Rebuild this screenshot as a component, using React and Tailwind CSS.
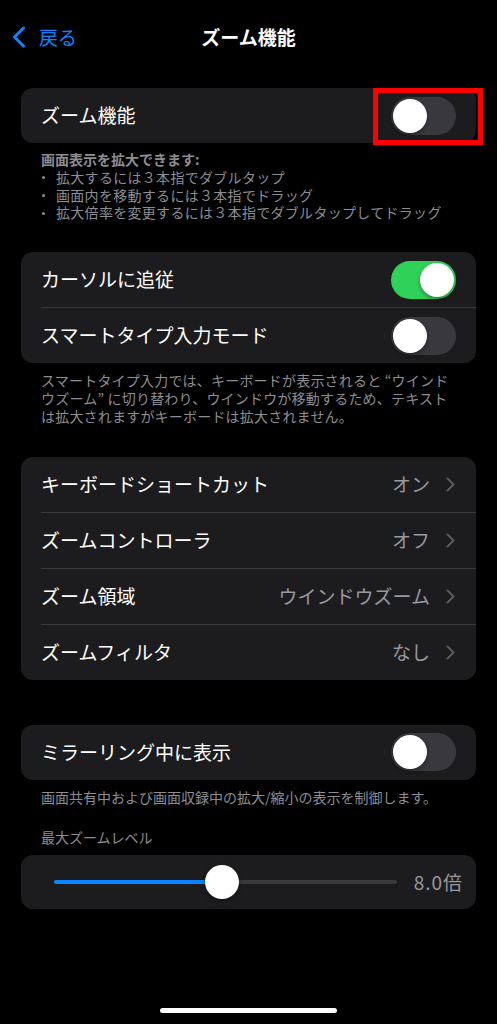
const font = { fontFamily: '"Noto Sans CJK JP", "Noto Sans", sans-serif' };

const Toggle = ({ on }) => (
  <div
    className={`relative w-[65px] h-[38px] rounded-full shrink-0 ${on ? "bg-[#30d158]" : "bg-[#39393d]"}`}
  >
    <div
      className={`absolute top-[2px] w-[34px] h-[34px] rounded-full bg-white shadow-[0_2px_4px_rgba(0,0,0,0.35)] ${on ? "right-[2px]" : "left-[2px]"}`}
    />
  </div>
);

const Chevron = () => (
  <svg width="9" height="15" viewBox="0 0 9 15" fill="none" className="shrink-0">
    <path d="M1.5 1.5 L7.5 7.5 L1.5 13.5" stroke="#5b5b60" strokeWidth="2" strokeLinecap="round" strokeLinejoin="round" />
  </svg>
);

const Divider = () => <div className="ml-[20px] h-px bg-[#38383a]" />;

const ToggleRow = ({ label, on }) => (
  <div className="flex items-center justify-between h-[55px] pl-[20px] pr-[20px]">
    <span className="text-[19px] text-white">{label}</span>
    <Toggle on={on} />
  </div>
);

const LinkRow = ({ label, value }) => (
  <div className="flex items-center justify-between h-[55px] pl-[20px] pr-[21px]">
    <span className="text-[19px] text-white">{label}</span>
    <div className="flex items-center gap-[16px]">
      <span className="text-[19px] text-[#98989f]">{value}</span>
      <Chevron />
    </div>
  </div>
);

const Footer = ({ children, className = "" }) => (
  <div className={`px-[41px] text-[14px] leading-[17.8px] text-[#8d8d93] ${className}`}>{children}</div>
);

const Bullet = ({ children }) => (
  <div className="flex items-center">
    <span className="w-[15px] flex items-center">
      <span className="ml-[1px] w-[3px] h-[3px] rounded-full bg-[#8d8d93]" />
    </span>
    <span className="tracking-[0.3px]">{children}</span>
  </div>
);

export default function App() {
  return (
    <div className="w-[497px] h-[1024px] bg-black overflow-hidden flex flex-col" style={font}>
      {/* nav */}
      <div className="relative h-[74px] flex items-center justify-center shrink-0">
        <div className="absolute left-[12px] top-0 h-full flex items-center gap-[13px]">
          <svg width="14" height="22" viewBox="0 0 14 22" fill="none">
            <path d="M11.5 2 L2.5 11 L11.5 20" stroke="#0a84ff" strokeWidth="3" strokeLinecap="round" strokeLinejoin="round" />
          </svg>
          <span className="text-[19px] text-[#0a84ff]">戻る</span>
        </div>
        <span className="text-[19px] font-bold text-white">ズーム機能</span>
      </div>

      {/* zoom toggle */}
      <div className="relative mt-[14px] mx-[21px] rounded-[12px] bg-[#1c1c1e]">
        <ToggleRow label="ズーム機能" on={false} />
        <div className="absolute left-[352px] top-0 w-[110px] h-[57px] border-[5px] border-[#ff0000]" />
      </div>
      <Footer className="pt-[8px]">
        <div className="font-semibold">画面表示を拡大できます:</div>
        <Bullet>拡大するには３本指でダブルタップ</Bullet>
        <Bullet>画面内を移動するには３本指でドラッグ</Bullet>
        <Bullet>拡大倍率を変更するには３本指でダブルタップしてドラッグ</Bullet>
      </Footer>

      {/* follow / smart typing */}
      <div className="mt-[30px] mx-[21px] rounded-[12px] bg-[#1c1c1e] overflow-hidden">
        <ToggleRow label="カーソルに追従" on={true} />
        <Divider />
        <ToggleRow label="スマートタイプ入力モード" on={false} />
      </div>
      <Footer className="pt-[9px] whitespace-nowrap tracking-[0.2px]">
        <div>スマートタイプ入力では、キーボードが表示されると “ウインド</div>
        <div>ウズーム” に切り替わり、ウインドウが移動するため、テキスト</div>
        <div>は拡大されますがキーボードは拡大されません。</div>
      </Footer>

      {/* links */}
      <div className="mt-[31px] mx-[21px] rounded-[12px] bg-[#1c1c1e] overflow-hidden">
        <LinkRow label="キーボードショートカット" value="オン" />
        <Divider />
        <LinkRow label="ズームコントローラ" value="オフ" />
        <Divider />
        <LinkRow label="ズーム領域" value="ウインドウズーム" />
        <Divider />
        <LinkRow label="ズームフィルタ" value="なし" />
      </div>

      {/* mirroring */}
      <div className="mt-[45px] mx-[21px] rounded-[12px] bg-[#1c1c1e]">
        <ToggleRow label="ミラーリング中に表示" on={false} />
      </div>
      <Footer className="pt-[9px]">画面共有中および画面収録中の拡大/縮小の表示を制御します。</Footer>

      <div className="mt-[22px] px-[41px] text-[14px] leading-[18px] text-[#8d8d93]">最大ズームレベル</div>

      {/* slider */}
      <div className="mt-[9px] mx-[21px] h-[54px] rounded-[12px] bg-[#1c1c1e] flex items-center pl-[33px] pr-[13px]">
        <div className="relative w-[343px] h-[4px] rounded-full bg-[#3a3a3c]">
          <div className="absolute left-0 top-0 h-full w-[168px] rounded-full bg-[#0a84ff]" />
          <div className="absolute left-[151px] top-[-15px] w-[34px] h-[34px] rounded-full bg-white shadow-[0_2px_5px_rgba(0,0,0,0.4)]" />
        </div>
        <span className="ml-auto text-[19px] text-[#98989f] tracking-[1px]">8.0倍</span>
      </div>

      <div className="flex-1" />
      <div className="mb-[11px] mx-auto w-[177px] h-[5px] rounded-full bg-white" />
    </div>
  );
}
